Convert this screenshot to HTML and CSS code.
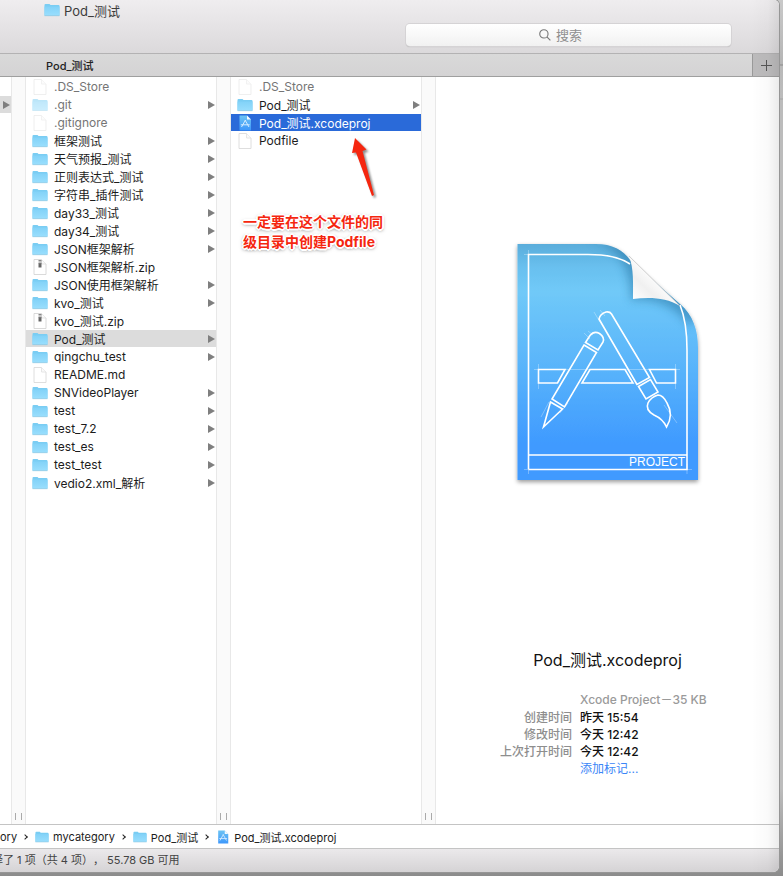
FILE: index.html
```html
<!DOCTYPE html>
<html lang="zh-CN">
<head>
<meta charset="utf-8">
<title>Pod_测试</title>
<link rel="stylesheet" href="styles.css">
</head>
<body>
<svg class="defs" aria-hidden="true">
  <defs>
    <linearGradient id="folderFill" x1="0" y1="0" x2="0" y2="1">
      <stop offset="0" stop-color="#82d2f8"/><stop offset="1" stop-color="#99defd"/>
    </linearGradient>
    <linearGradient id="projFill" x1="0" y1="0" x2="0" y2="1">
      <stop offset="0" stop-color="#6cc3f3"/><stop offset="1" stop-color="#3d97fb"/>
    </linearGradient>
    <symbol id="folder" viewBox="0 0 16 14">
      <path d="M.5 2Q.5 1 1.500 1H5.500L6.500 2H14.500Q15.500 2 15.500 3V12.500H.5Z" fill="#7acdf3"/>
      <path d="M.5 3.500H15.500V12.500H.5Z" fill="url(#folderFill)"/>
      <path d="M.5 12.700H15.500" stroke="#8ac3de" stroke-width=".6"/>
    </symbol>
    <symbol id="file" viewBox="0 0 16 16">
      <path d="M2 .5H9.500L14 5V15.500H2Z" fill="#fff" stroke="#d6d6d6" stroke-width=".8"/>
      <path d="M9.500 .5V5H14" fill="#fafafa" stroke="#e0e0e0" stroke-width=".8"/>
    </symbol>
    <symbol id="zip" viewBox="0 0 16 16">
      <path d="M2 .5H9.500L14 5V15.500H2Z" fill="#fff" stroke="#d0d0d0" stroke-width=".8"/>
      <path d="M9.500 .5V5H14" fill="#fafafa" stroke="#dcdcdc" stroke-width=".8"/>
      <path d="M8 1V5" stroke="#888" stroke-width="3" stroke-dasharray="1 .5"/>
      <path d="M6.500 4.500H9.500V8.500H6.500Z" fill="#666"/>
    </symbol>
    <symbol id="project" viewBox="0 0 16 16">
      <path d="M2.500 .5H10L14 4.500V15.500H2.500Z" fill="url(#projFill)"/>
      <path d="M10 .5V4.500H14Z" fill="#f4f9ff"/>
      <path d="M4.500 12L8.500 5M8 5L12 12M3.800 9.800H12.700" fill="none" stroke="#d3ecff" stroke-width="1"/>
    </symbol>
  </defs>
</svg>

<main class="window">
  <header class="toolbar">
    <h1 class="title"><svg class="icon"><use href="#folder"/></svg>Pod_测试</h1>
    <label class="search">
      <svg class="search-icon" viewBox="0 0 13 13" aria-hidden="true"><circle cx="5.300" cy="5.300" r="4.500"/><path d="M8.600 8.600L12.300 12.300"/></svg>
      <input type="search" placeholder="搜索" aria-label="搜索">
    </label>
  </header>

  <nav class="tabs">
    <button class="tab" type="button">Pod_测试</button>
    <button class="tab-add" type="button" aria-label="+"><svg viewBox="0 0 11 11"><path d="M5.500 0V11M0 5.500H11"/></svg></button>
  </nav>

  <div class="browser">
    <ul class="column parent">
      <li class="row blank"></li>
      <li class="row current"><i class="more"></i></li>
    </ul>
    <div class="divider"></div>
    <ul class="column">
      <li class="row hidden"><svg class="icon"><use href="#file"/></svg><span>.DS_Store</span></li>
      <li class="row hidden"><svg class="icon"><use href="#folder"/></svg><span>.git</span><i class="more"></i></li>
      <li class="row hidden"><svg class="icon"><use href="#file"/></svg><span>.gitignore</span></li>
      <li class="row"><svg class="icon"><use href="#folder"/></svg><span>框架测试</span><i class="more"></i></li>
      <li class="row"><svg class="icon"><use href="#folder"/></svg><span>天气预报_测试</span><i class="more"></i></li>
      <li class="row"><svg class="icon"><use href="#folder"/></svg><span>正则表达式_测试</span><i class="more"></i></li>
      <li class="row"><svg class="icon"><use href="#folder"/></svg><span>字符串_插件测试</span><i class="more"></i></li>
      <li class="row"><svg class="icon"><use href="#folder"/></svg><span>day33_测试</span><i class="more"></i></li>
      <li class="row"><svg class="icon"><use href="#folder"/></svg><span>day34_测试</span><i class="more"></i></li>
      <li class="row"><svg class="icon"><use href="#folder"/></svg><span>JSON框架解析</span><i class="more"></i></li>
      <li class="row"><svg class="icon"><use href="#zip"/></svg><span>JSON框架解析.zip</span></li>
      <li class="row"><svg class="icon"><use href="#folder"/></svg><span>JSON使用框架解析</span><i class="more"></i></li>
      <li class="row"><svg class="icon"><use href="#folder"/></svg><span>kvo_测试</span><i class="more"></i></li>
      <li class="row"><svg class="icon"><use href="#zip"/></svg><span>kvo_测试.zip</span></li>
      <li class="row current"><svg class="icon"><use href="#folder"/></svg><span>Pod_测试</span><i class="more"></i></li>
      <li class="row"><svg class="icon"><use href="#folder"/></svg><span>qingchu_test</span><i class="more"></i></li>
      <li class="row"><svg class="icon"><use href="#file"/></svg><span>README.md</span></li>
      <li class="row"><svg class="icon"><use href="#folder"/></svg><span>SNVideoPlayer</span><i class="more"></i></li>
      <li class="row"><svg class="icon"><use href="#folder"/></svg><span>test</span><i class="more"></i></li>
      <li class="row"><svg class="icon"><use href="#folder"/></svg><span>test_7.2</span><i class="more"></i></li>
      <li class="row"><svg class="icon"><use href="#folder"/></svg><span>test_es</span><i class="more"></i></li>
      <li class="row"><svg class="icon"><use href="#folder"/></svg><span>test_test</span><i class="more"></i></li>
      <li class="row"><svg class="icon"><use href="#folder"/></svg><span>vedio2.xml_解析</span><i class="more"></i></li>
    </ul>
    <div class="divider"></div>
    <div class="column">
      <ul class="rows">
        <li class="row hidden"><svg class="icon"><use href="#file"/></svg><span>.DS_Store</span></li>
        <li class="row"><svg class="icon"><use href="#folder"/></svg><span>Pod_测试</span><i class="more"></i></li>
        <li class="row selected"><svg class="icon"><use href="#project"/></svg><span>Pod_测试.xcodeproj</span></li>
        <li class="row"><svg class="icon"><use href="#file"/></svg><span>Podfile</span></li>
      </ul>
      <div class="note">
        <svg class="note-arrow" viewBox="0 0 30 64" aria-hidden="true"><path d="M6 1L17.500 12.500L13.500 14L25 58L23 59L7 15.500L3 16Z"/></svg>
        <p>一定要在这个文件的同<br>级目录中创建Podfile</p>
      </div>
    </div>
    <div class="divider"></div>

    <section class="preview">
      <div class="artwork">
        <svg viewBox="508 236 200 252" role="img" aria-label="PROJECT">
          <defs>
            <linearGradient id="sheet" x1="0" y1="0" x2="0" y2="1">
              <stop offset="0" stop-color="#5aaddb"/><stop offset=".1" stop-color="#69c0ef"/><stop offset=".2" stop-color="#70c9f8"/>
              <stop offset=".55" stop-color="#57b2fb"/><stop offset=".85" stop-color="#3f9aff"/><stop offset="1" stop-color="#409aff"/>
            </linearGradient>
            <linearGradient id="curl" gradientUnits="userSpaceOnUse" x1="632" y1="299" x2="656" y2="274">
              <stop offset="0" stop-color="#fff"/><stop offset=".5" stop-color="#f0f0f0"/><stop offset="1" stop-color="#fff"/>
            </linearGradient>
            <filter id="drop" x="-10%" y="-10%" width="120%" height="120%"><feDropShadow dx="0" dy="2" stdDeviation="2" flood-opacity=".4"/></filter>
            <filter id="soft" x="-50%" y="-50%" width="200%" height="200%"><feGaussianBlur stdDeviation="5"/></filter>
            <clipPath id="sheetClip"><path d="M517.500 244H596C612 244 623 250 630 260L680 304C693 315 698 330 698 348V480H517.500Z"/></clipPath>
          </defs>
          <path d="M517.500 244H596C612 244 623 250 630 260L680 304C693 315 698 330 698 348V480H517.500Z" fill="url(#sheet)" filter="url(#drop)"/>
          <g clip-path="url(#sheetClip)">
            <path d="M588 240Q630 246 631 300Q668 297 690 326L702 310L630 244Z" fill="#246e9c" opacity=".5" filter="url(#soft)"/>
            <g fill="none" stroke="#fff" stroke-width="1.600">
              <path d="M528.500 469V254.500H588Q616 254.500 630 264"/>
              <path d="M680 305Q687 322 687 350V469.500H528.500M528.500 455H687"/>
              <path d="M565 369.500H538.500V383H557.500ZM590 369.500H625L633 383H582ZM649.500 369.500H675.500V383H656.500Z"/>
              <path d="M584 345L596.500 352.500L564.500 407L552 399ZM585.500 342.500L590 335.500Q594 330.500 599.500 333.500Q605 337.500 603 342L598 350Z"/>
              <path d="M550.500 402L562.500 409L543.500 427Z"/>
              <path d="M637 384.500L599 319Q600 314 606 312Q610 311.500 611.500 314L649.500 377.500ZM638.500 386.500L650.500 379.500L658 392L646 399Z"/>
              <path d="M648 403Q651 397 658 395Q663 395 667 403Q674 415 666.500 427Q663 419 654 415Q645 410 648 403Z"/>
            </g>
            <path d="M524 254.500H536M528.500 250V262M524 469.500H536M528.500 464V474M682 469.500H692M687 464V474M594 312L600 322M600 310L605 316M584 333L590 339M588 331L593 335M541 417L549 402M560 413L568 403M664 405L677 423M534 369.500H680M538.500 364V389M675.500 364V389" fill="none" stroke="#fff" stroke-width="1" opacity=".3"/>
          </g>
          <path d="M629 256C634 269 633 284 633 299C648 297 666 297 680 306Z" fill="url(#curl)"/>
          <path d="M629 256L680 306" stroke="#c4c4c4" stroke-width=".8"/>
          <text x="685" y="466" text-anchor="end">PROJECT</text>
        </svg>
      </div>
      <h2 class="name">Pod_测试.xcodeproj</h2>
      <dl class="meta">
        <dt></dt><dd class="kind">Xcode Project－35 KB</dd>
        <dt>创建时间</dt><dd>昨天 15:54</dd>
        <dt>修改时间</dt><dd>今天 12:42</dd>
        <dt>上次打开时间</dt><dd>今天 12:42</dd>
        <dt></dt><dd><a href="#">添加标记...</a></dd>
      </dl>
    </section>
  </div>

  <nav class="path">
    <span>ory</span><b class="sep"></b>
    <span><svg class="icon"><use href="#folder"/></svg>mycategory</span><b class="sep"></b>
    <span><svg class="icon"><use href="#folder"/></svg>Pod_测试</span><b class="sep"></b>
    <span><svg class="icon"><use href="#project"/></svg>Pod_测试.xcodeproj</span>
  </nav>
  <footer class="status"><span>择了 1 项（共 4 项）， 55.78 GB 可用</span></footer>
</main>
</body>
</html>
```

FILE: styles.css
```css
* { box-sizing: border-box; }

body {
  margin: 0;
  height: 100vh;
  padding: 0 4px 4px 0;
  overflow: hidden;
  background: linear-gradient(#c9c9c9, #b5b5b5 64px, #8a8a8a 65px, #b9b9b9 66px, #bcbcbc 98px, #a5a5a5 99px, #bcbcbc 100px, #bcbcbc 90%, #8c8c8c);
  font-family: Inter, "Noto Sans CJK SC", sans-serif;
  font-size: 12px;
  color: #1c1c1c;
}

ul, dl, dd, p, h1, h2 { margin: 0; padding: 0; list-style: none; }
button, input { font: inherit; border: 0; margin: 0; }
.defs { position: absolute; width: 0; height: 0; }
.icon { width: 16px; height: 16px; flex: none; }

.window {
  position: relative;
  display: flex;
  flex-direction: column;
  height: 100%;
  background: #fff;
  border-radius: 0 5px 6px 0;
  overflow: hidden;
  box-shadow: 0 0 0 1px #969696;
}
.window::after {
  content: "";
  position: absolute;
  inset: 0 0 0 auto;
  width: 28px;
  background: linear-gradient(90deg, transparent, rgba(0, 0, 0, .02) 60%, rgba(0, 0, 0, .08));
  pointer-events: none;
}

.toolbar {
  height: 54px;
  flex: none;
  padding: 0 48px 7px 44px;
  display: flex;
  justify-content: space-between;
  background: linear-gradient(#efedef, #dbd9db);
  border-bottom: 1px solid #b3b2b3;
}
.title {
  display: flex;
  align-items: center;
  gap: 4px;
  height: 20px;
  font-size: 13px;
  font-weight: 400;
  color: #3c3c3c;
}
.search {
  position: relative;
  align-self: flex-end;
  width: 48%;
  max-width: 325px;
}
.search input {
  display: block;
  width: 100%;
  height: 22px;
  padding: 0 0 0 14px;
  text-align: center;
  font-size: 13px;
  border-radius: 4px;
  background: linear-gradient(#fff, #f1f1f1);
  box-shadow: 0 0 0 1px #d5d3d5, 0 1px 1px #aaa;
  appearance: none;
  outline: 0;
}
.search input::placeholder { color: #8f8f8f; opacity: 1; }
.search-icon {
  position: absolute;
  left: calc(50% - 30px);
  top: 5px;
  width: 12px;
  height: 12px;
  fill: none;
  stroke: #777;
  stroke-width: 1.2;
}

.tabs {
  display: flex;
  flex: none;
  height: 23px;
  border-bottom: 1px solid #9f9f9f;
  background: linear-gradient(#d9d9d9, #d4d3d4);
}
.tab {
  flex: 1;
  padding: 0 46px;
  text-align: left;
  font-size: 11px;
  font-weight: 500;
  color: #222;
  background: none;
}
.tab-add {
  width: 27px;
  padding: 0;
  display: grid;
  place-items: center;
  background: #bcbbbc;
  border-left: 1px solid #999;
}
.tab-add svg { width: 11px; height: 11px; stroke: #555; fill: none; }

.browser { display: flex; flex: 1; min-height: 0; }
.column {
  position: relative;
  flex: none;
  width: 190px;
  padding-top: 1px;
}
.parent { width: 11px; }
.row {
  display: flex;
  align-items: center;
  gap: 6px;
  height: 17px;
  margin-bottom: 1px;
  padding: 0 1px 0 6px;
  white-space: nowrap;
}
.parent .row { padding: 0 1px; }
.row.hidden { color: #757575; }
.row.hidden .icon { opacity: .5; }
.row.current { background: #dcdcdc; }
.row.selected { background: #2a6ad9; color: #fff; }
.more {
  margin-left: auto;
  border-left: 7px solid #7f7f7f;
  border-top: 4px solid transparent;
  border-bottom: 4px solid transparent;
}
.divider {
  flex: none;
  width: 15px;
  display: flex;
  align-items: flex-end;
  justify-content: center;
  padding-bottom: 4px;
  background: #fafafa;
  border: solid #e8e8e8;
  border-width: 0 1px;
}
.divider::after {
  content: "";
  width: 5px;
  height: 7px;
  border: solid #aaa;
  border-width: 0 1px;
}

.note {
  position: absolute;
  left: 12px;
  top: 60px;
  font-size: 14px;
  font-weight: 700;
  line-height: 20px;
  white-space: nowrap;
  color: #f5260f;
}
.note p {
  text-shadow: 1px 0 #fff, -1px 0 #fff, 0 1px #fff, 0 -1px #fff, 1px 1px #fff, -1px -1px #fff, 1px -1px #fff, -1px 1px #fff,
    2px 0 #fff, -2px 0 #fff, 0 2px #fff, 0 -2px #fff, 0 1px 3px #666, 0 1px 4px #777;
}
.note-arrow {
  display: block;
  width: 30px;
  height: 64px;
  margin-left: 106px;
  margin-bottom: 11px;
  fill: #f5260f;
  filter: drop-shadow(2px 2px 1px rgba(0, 0, 0, .45));
}

.preview {
  flex: 1;
  min-width: 0;
  display: flex;
  flex-direction: column;
  padding-bottom: 47px;
}
.artwork {
  flex: 1;
  display: grid;
  place-items: center;
  padding-bottom: 2px;
}
.artwork svg { width: 200px; height: 252px; }
.artwork text { fill: #fff; font: 12px "Liberation Sans", sans-serif; }
.name {
  font-size: 16px;
  font-weight: 400;
  line-height: 24px;
  text-align: center;
  margin-bottom: 19px;
  color: #111;
}
.meta {
  display: grid;
  grid-template-columns: 13fr 19fr;
  column-gap: 8px;
  line-height: 17px;
  font-weight: 500;
  color: #111;
}
.meta dt { text-align: right; color: #8e8e8e; }
.meta .kind { color: #9a9a9a; margin-bottom: 1px; }
.meta a { color: #3b86f7; text-decoration: none; font-weight: 400; }

.path, .status {
  display: flex;
  align-items: center;
  flex: none;
  height: 24px;
  font-size: 11px;
  white-space: nowrap;
  border-top: 1px solid #c4c4c4;
}
.path { gap: 6px; }
.path span { display: flex; align-items: center; gap: 4px; }
.path .icon { width: 14px; height: 14px; }
.sep {
  width: 4px;
  height: 4px;
  margin: 0 2px 0 0;
  border: solid #222;
  border-width: 1px 1px 0 0;
  transform: rotate(45deg);
}
.status {
  padding-bottom: 3px;
  background: linear-gradient(#ebe9eb, #d5d3d5);
  color: #444;
  text-spacing-trim: space-all;
}
.status span { margin-left: -8px; }
```
